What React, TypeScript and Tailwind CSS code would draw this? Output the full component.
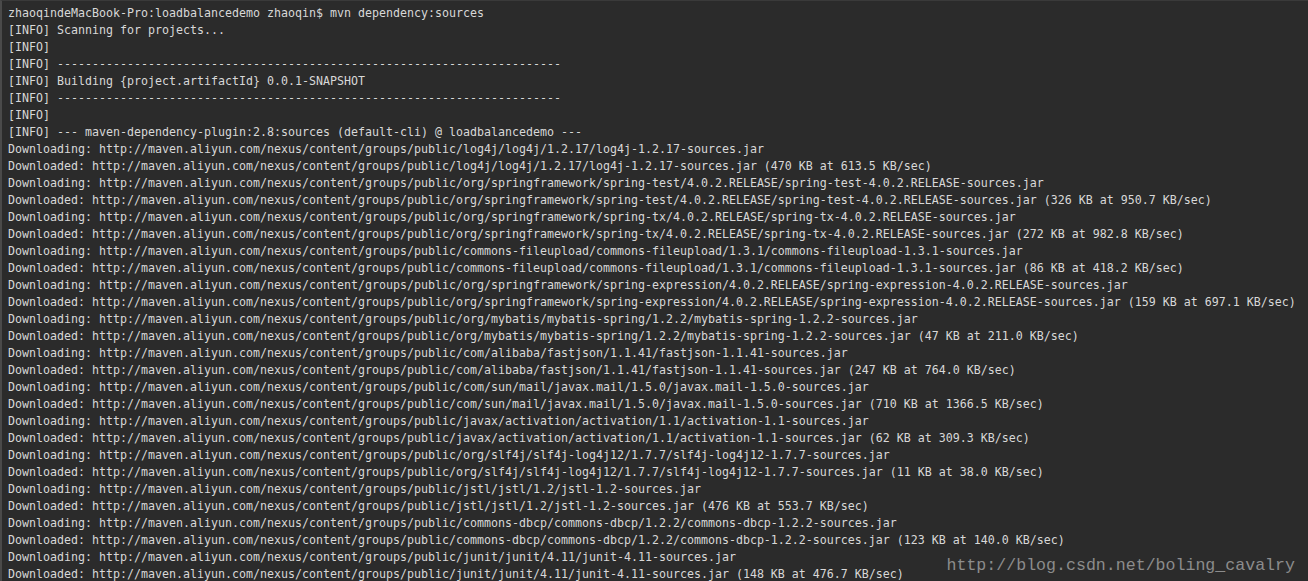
import React from "react";

const B = "http://maven.aliyun.com/nexus/content/groups/public/";
const dash = "-".repeat(72);

const deps: [string, string][] = [
  ["log4j/log4j/1.2.17/log4j-1.2.17-sources.jar", "(470 KB at 613.5 KB/sec)"],
  ["org/springframework/spring-test/4.0.2.RELEASE/spring-test-4.0.2.RELEASE-sources.jar", "(326 KB at 950.7 KB/sec)"],
  ["org/springframework/spring-tx/4.0.2.RELEASE/spring-tx-4.0.2.RELEASE-sources.jar", "(272 KB at 982.8 KB/sec)"],
  ["commons-fileupload/commons-fileupload/1.3.1/commons-fileupload-1.3.1-sources.jar", "(86 KB at 418.2 KB/sec)"],
  ["org/springframework/spring-expression/4.0.2.RELEASE/spring-expression-4.0.2.RELEASE-sources.jar", "(159 KB at 697.1 KB/sec)"],
  ["org/mybatis/mybatis-spring/1.2.2/mybatis-spring-1.2.2-sources.jar", "(47 KB at 211.0 KB/sec)"],
  ["com/alibaba/fastjson/1.1.41/fastjson-1.1.41-sources.jar", "(247 KB at 764.0 KB/sec)"],
  ["com/sun/mail/javax.mail/1.5.0/javax.mail-1.5.0-sources.jar", "(710 KB at 1366.5 KB/sec)"],
  ["javax/activation/activation/1.1/activation-1.1-sources.jar", "(62 KB at 309.3 KB/sec)"],
  ["org/slf4j/slf4j-log4j12/1.7.7/slf4j-log4j12-1.7.7-sources.jar", "(11 KB at 38.0 KB/sec)"],
  ["jstl/jstl/1.2/jstl-1.2-sources.jar", "(476 KB at 553.7 KB/sec)"],
  ["commons-dbcp/commons-dbcp/1.2.2/commons-dbcp-1.2.2-sources.jar", "(123 KB at 140.0 KB/sec)"],
  ["junit/junit/4.11/junit-4.11-sources.jar", "(148 KB at 476.7 KB/sec)"],
];

const lines: string[] = [
  "zhaoqindeMacBook-Pro:loadbalancedemo zhaoqin$ mvn dependency:sources",
  "[INFO] Scanning for projects...",
  "[INFO]",
  "[INFO] " + dash,
  "[INFO] Building {project.artifactId} 0.0.1-SNAPSHOT",
  "[INFO] " + dash,
  "[INFO]",
  "[INFO] --- maven-dependency-plugin:2.8:sources (default-cli) @ loadbalancedemo ---",
  ...deps.flatMap(([p, s]) => [
    "Downloading: " + B + p,
    "Downloaded: " + B + p + " " + s,
  ]),
];

export default function App() {
  return (
    <div className="relative h-[581px] w-[1308px] overflow-hidden bg-[#2b2b2b] border-l-2 border-l-[#4a4a4a] border-t border-t-[#3a3a3a]">
      <div
        className="pl-[6px] pt-[4px] text-[11.63px] leading-[17px] text-[#d8d8d8] whitespace-pre"
        style={{ fontFamily: '"DejaVu Sans Mono", "Liberation Mono", monospace' }}
      >
        {lines.map((l, i) => (
          <div key={i} className="h-[17px]">
            {l || " "}
          </div>
        ))}
      </div>
      <div
        className="absolute right-[13px] bottom-[5px] text-[16.6px] leading-[20px] text-[#8c8c8c] whitespace-pre"
        style={{ fontFamily: '"Liberation Mono", monospace' }}
      >
        http://blog.csdn.net/boling_cavalry
      </div>
    </div>
  );
}
